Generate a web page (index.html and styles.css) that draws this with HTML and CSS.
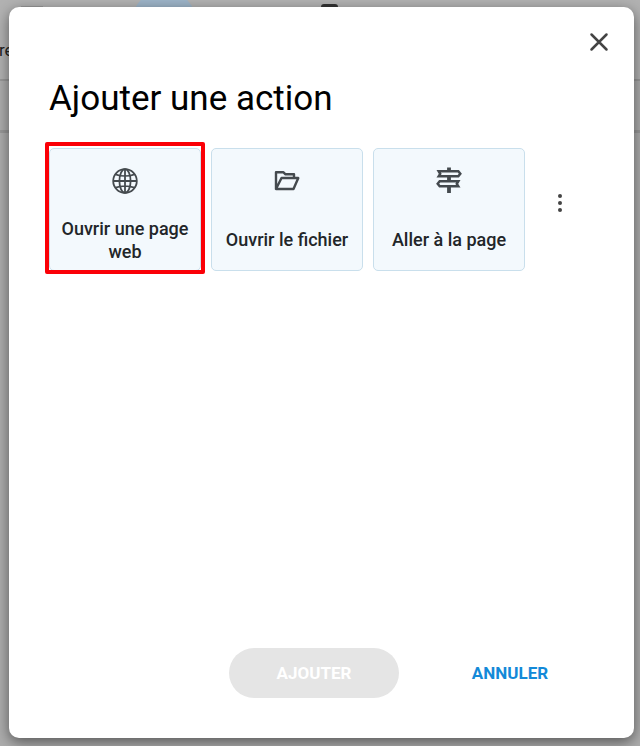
FILE: index.html
```html
<!DOCTYPE html>
<html lang="fr">
<head>
<meta charset="utf-8">
<meta name="viewport" content="width=device-width, initial-scale=1">
<title>Ajouter une action</title>
<link rel="stylesheet" href="styles.css">
</head>
<body>
<div class="backdrop" aria-hidden="true">
  <div class="backdrop-top">
    <span class="backdrop-text">re</span>
    <span class="backdrop-tab"></span>
    <span class="backdrop-dot"></span>
    <span class="backdrop-icon"></span>
  </div>
  <div class="backdrop-bar"></div>
</div>
<main class="dialog" role="dialog" aria-labelledby="dialog-title">
  <header class="dialog-header">
    <button class="icon-button" type="button" aria-label="Fermer">
      <svg width="24" height="24" viewBox="0 0 24 24" fill="none" stroke="#444" stroke-width="2.5" stroke-linecap="round"><path d="M4.500 4.500l15 15M19.500 4.500l-15 15"/></svg>
    </button>
  </header>
  <h1 class="dialog-title" id="dialog-title">Ajouter une action</h1>
  <div class="actions">
    <button class="card card-selected" type="button">
      <svg class="card-icon" width="28" height="28" viewBox="0 0 28 28" fill="none" stroke="#444a4e" stroke-width="1.800"><circle cx="14" cy="14" r="11.800"/><ellipse cx="14" cy="14" rx="5.600" ry="11.800"/><path d="M14 2v24M2 14h24M4.500 7.300c5.500 2.200 13.500 2.200 19 0M4.500 20.700c5.500-2.200 13.500-2.200 19 0"/></svg>
      <span class="card-label">Ouvrir une page web</span>
    </button>
    <button class="card" type="button">
      <svg class="card-icon" width="28" height="28" viewBox="0 0 28 28" fill="none" stroke="#444a4e" stroke-width="2.400" stroke-linejoin="round"><path d="M3 22V5.300h7.500l2 2H21V11M3 22h17.500l4.800-11H8.500L3 22z"/></svg>
      <span class="card-label">Ouvrir le fichier</span>
    </button>
    <button class="card" type="button">
      <svg class="card-icon" width="28" height="28" viewBox="0 0 28 28" fill="none" stroke="#444a4e" stroke-width="2.500"><path d="M14 0.500v4M14 10v4M14 20v6" stroke-width="3.800"/><path d="M3.700 4.300H23.300l2 2.500-2 2.500H3.700l1.500-2.500zM23.300 14.300H4.700l-2 2.500 2 2.500H23.300l-1.500-2.500z"/></svg>
      <span class="card-label">Aller à la page</span>
    </button>
    <button class="icon-button more" type="button" aria-label="Plus d’actions">
      <svg width="24" height="24" viewBox="0 0 24 24" fill="#444"><circle cx="12" cy="5" r="2"/><circle cx="12" cy="12" r="2"/><circle cx="12" cy="19" r="2"/></svg>
    </button>
  </div>
  <footer class="dialog-footer">
    <button class="button button-primary" type="button" disabled>AJOUTER</button>
    <button class="button button-text" type="button">ANNULER</button>
  </footer>
</main>
</body>
</html>
```
FILE: styles.css
```css
* {
  box-sizing: border-box;
}

body {
  margin: 0;
  padding: 7px 6px 8px 9px;
  min-height: 100vh;
  display: flex;
  background: #adadad;
  font-family: Roboto, "Liberation Sans", sans-serif;
  color: #000;
}

button {
  margin: 0;
  padding: 0;
  border: 0;
  background: none;
  font: inherit;
  cursor: pointer;
}

svg {
  display: block;
}

.backdrop {
  position: absolute;
  inset: 0;
  overflow: hidden;
}

.backdrop-top {
  height: 81px;
  border-bottom: 2px solid #999;
  background: #b2b2b2;
}

.backdrop-bar {
  height: 52px;
  border-bottom: 3px solid #999;
}

.backdrop-text {
  position: absolute;
  top: 40px;
  left: -1px;
  font-size: 17px;
  line-height: 20px;
  color: #222;
}

.backdrop-tab {
  position: absolute;
  top: 6px;
  left: 21px;
  width: 22px;
  height: 4px;
  background: #999;
}

.backdrop-dot {
  position: absolute;
  top: -10px;
  left: 132px;
  width: 64px;
  height: 64px;
  border-radius: 50%;
  background: #9db4c8;
}

.backdrop-icon {
  position: absolute;
  top: 4px;
  left: 321px;
  width: 17px;
  height: 20px;
  border: 3px solid #333;
  border-radius: 3px;
}

.dialog {
  position: relative;
  flex: 1;
  display: flex;
  flex-direction: column;
  border-radius: 10px;
  background: #fff;
  box-shadow: 0 4px 14px rgba(0, 0, 0, 0.5);
}

.dialog-header {
  display: flex;
  justify-content: flex-end;
  padding: 23px 23px 0 0;
}

.icon-button {
  width: 24px;
  height: 24px;
}

.dialog-title {
  margin: 25px 40px 29px;
  font-size: 35px;
  font-weight: 400;
  line-height: 40px;
}

.actions {
  display: grid;
  grid-template-columns: repeat(3, 1fr) 37px;
  column-gap: 10px;
  padding: 0 62px 0 40px;
}

.card {
  position: relative;
  display: flex;
  flex-direction: column;
  align-items: center;
  min-height: 123px;
  padding: 18px 8px 6px;
  border: 1px solid #c9dfec;
  border-radius: 5px;
  background: #f3f9fd;
  color: #222629;
  font-size: 18px;
  font-weight: 500;
  line-height: 23px;
}

.card-selected::after {
  content: "";
  position: absolute;
  inset: -7px -5px -4px;
  border: 4px solid #fb0007;
  border-radius: 2px;
}

.card-label {
  flex: 1;
  display: flex;
  align-items: center;
  margin-top: 20px;
  text-align: center;
}

.more {
  justify-self: end;
  margin-top: 43px;
}

.dialog-footer {
  display: flex;
  justify-content: flex-end;
  gap: 26px;
  margin-top: auto;
  padding: 40px 39px;
}

.button {
  width: 170px;
  height: 50px;
  border-radius: 25px;
  font-size: 17px;
  font-weight: 700;
  line-height: 24px;
}

.button-primary {
  background: #e5e5e5;
  color: #fff;
}

.button-text {
  color: #1389d8;
}
```
